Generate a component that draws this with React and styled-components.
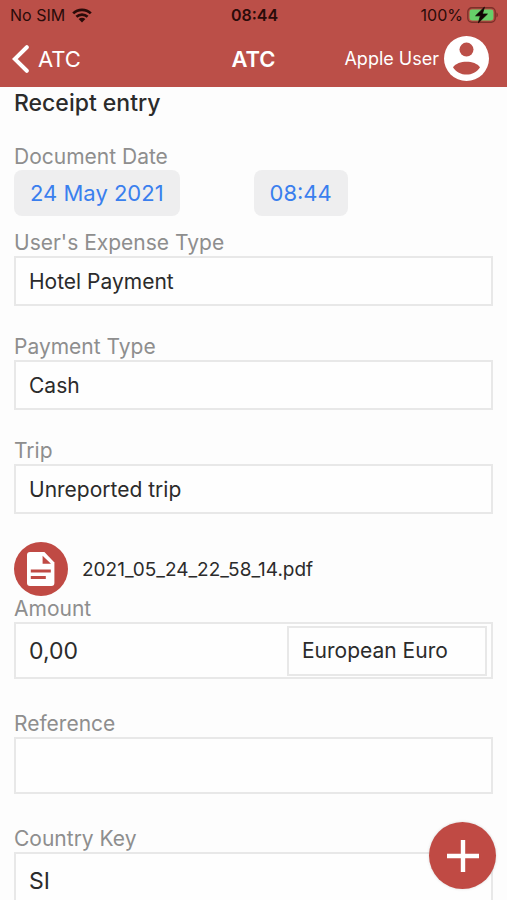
import styled, { createGlobalStyle } from "styled-components";
import { useState } from "react";

const GlobalStyle = createGlobalStyle`
  * {
    box-sizing: border-box;
  }

  body {
    margin: 0;
    background-color: #fdfdfd;
    color: #2b2b2b;
    font-family: Inter, "Liberation Sans", sans-serif;
  }

  button,
  input,
  select {
    font-family: inherit;
    color: inherit;
  }
`;

const StyledApp = styled.div`
  display: flex;
  flex-direction: column;
  height: 100vh;
`;

const StyledHeader = styled.header`
  flex-shrink: 0;
  background-color: #bb4f48;
`;

const StyledStatusBar = styled.div`
  display: grid;
  grid-template-columns: 1fr auto 1fr;
  align-items: center;
  height: 30px;
  padding: 0 8px 0 10px;
  font-size: 16px;
  color: #2a0b09;

  strong {
    font-weight: 600;
  }
`;

const StyledStatusGroup = styled.div`
  display: flex;
  align-items: center;
  justify-content: ${({ $end }) => ($end ? "flex-end" : "flex-start")};
  gap: ${({ $end }) => ($end ? "4px" : "7px")};
`;

const StyledNav = styled.nav`
  display: grid;
  grid-template-columns: 1fr auto 1fr;
  align-items: center;
  height: 57px;
  padding: 0 12px;
  color: white;
`;

const StyledNavTitle = styled.h1`
  margin: 0;
  font-size: 22px;
  font-weight: 600;
  line-height: 26px;
`;

const StyledBack = styled.a`
  display: flex;
  align-items: center;
  gap: 9px;
  font-size: 22px;
  line-height: 26px;
  color: white;
  text-decoration: none;
`;

const StyledUser = styled.button`
  display: flex;
  align-items: center;
  justify-self: end;
  gap: 5px;
  padding: 0 6px 0 0;
  border: none;
  background: none;
  font-size: 18px;
  color: white;
  white-space: nowrap;
`;

const StyledMain = styled.main`
  flex: 1;
  overflow-y: auto;
  scrollbar-width: none;
  padding: 3px 14px 24px;
`;

const StyledHeading = styled.h2`
  margin: 0 0 28px;
  font-size: 23px;
  font-weight: 500;
  line-height: 26px;
`;

const StyledField = styled.div`
  display: flex;
  flex-direction: column;
  margin-bottom: ${({ $gap }) => $gap || 28}px;
`;

const StyledLabel = styled.label`
  font-size: 21px;
  line-height: 26px;
  color: #8e8e8e;
`;

const StyledDateRow = styled.div`
  display: grid;
  grid-template-columns: 1fr 1fr;
  justify-items: start;
`;

const StyledChip = styled.button`
  height: 46px;
  padding: 0 16px;
  border: none;
  border-radius: 8px;
  background-color: #eeeeef;
  font-size: 22px;
  color: #3a7fee;
`;

const StyledSelect = styled.select`
  width: 100%;
  height: 50px;
  padding: 0 13px;
  border: 2px solid #e8e8e8;
  border-radius: 0;
  appearance: none;
  background-color: #fefefe;
  font-size: 21px;
`;

const StyledInput = styled.input`
  width: 100%;
  height: 57px;
  padding: 0 13px;
  border: 2px solid #e8e8e8;
  border-radius: 0;
  background-color: #fefefe;
  font-size: 23px;
`;

const StyledAmount = styled.div`
  display: flex;
  align-items: center;
  height: 57px;
  padding-right: 4px;
  border: 2px solid #e8e8e8;
  background-color: #fefefe;

  input {
    flex: 1;
    min-width: 0;
    height: 100%;
    border: none;
    background: none;
  }

  select {
    flex: 0 0 200px;
  }
`;

const StyledFile = styled.a`
  display: flex;
  align-items: center;
  gap: 14px;
  font-size: 19px;
  color: inherit;
  text-decoration: none;
`;

const StyledFileIcon = styled.span`
  display: flex;
  align-items: center;
  justify-content: center;
  width: 54px;
  height: 54px;
  border-radius: 50%;
  background-color: #c04a44;
`;

const StyledAdd = styled.button`
  position: fixed;
  right: 11px;
  bottom: 11px;
  display: flex;
  align-items: center;
  justify-content: center;
  width: 67px;
  height: 67px;
  padding: 0;
  border: none;
  border-radius: 50%;
  background-color: #c04a44;
  box-shadow: 0 0 3px rgba(0, 0, 0, 0.15);
`;

const WifiIcon = () => (
  <svg width="20" height="15" viewBox="0 0 20 15" fill="none">
    <path
      d="M1.2 5.4C6 0.6 14 0.6 18.8 5.4M4.4 8.8C7.6 5.8 12.4 5.8 15.6 8.8"
      stroke="currentColor"
      strokeWidth="2.7"
    />
    <path d="M6.6 11.1C8.6 9.4 11.4 9.4 13.4 11.1L10 14.6Z" fill="currentColor" />
  </svg>
);

const BatteryIcon = () => (
  <svg width="32" height="18" viewBox="0 0 32 18">
    <rect x="0.8" y="1.8" width="27.4" height="14.4" rx="4" fill="none" stroke="#7c3029" strokeWidth="1.4" />
    <rect x="2.6" y="3.6" width="23.8" height="10.8" rx="2.4" fill="#66cf69" />
    <path d="M29.4 6.6C31.4 7.2 31.4 10.8 29.4 11.4Z" fill="#7c3029" />
    <path
      d="M17.4 1.2L8.6 9.8H13.4L11.4 16.8L20.4 8H15.4Z"
      fill="#100504"
      stroke="#100504"
      strokeWidth="0.8"
      strokeLinejoin="round"
    />
  </svg>
);

const BackIcon = () => (
  <svg width="17" height="28" viewBox="0 0 17 28" fill="none">
    <path
      d="M14.8 2.2L2.8 14L14.8 25.8"
      stroke="currentColor"
      strokeWidth="4"
      strokeLinecap="round"
      strokeLinejoin="miter"
    />
  </svg>
);

const UserIcon = () => (
  <svg width="45" height="45" viewBox="0 0 45 45">
    <circle cx="22.5" cy="22.5" r="22.5" fill="white" />
    <circle cx="22.5" cy="13.6" r="7" fill="#bb4f48" />
    <path d="M9 31.2C14 23.9 31 23.9 36 31.2C30 41 15 41 9 31.2Z" fill="#bb4f48" />
  </svg>
);

const DocumentIcon = () => (
  <svg width="28" height="34" viewBox="0 0 28 34">
    <path
      d="M3 0H17.4L27.4 10.4V31A3 3 0 0 1 24.4 34H3A3 3 0 0 1 0 31V3A3 3 0 0 1 3 0Z"
      fill="white"
    />
    <path d="M15.6 3.8V11.8H24ZM3.8 17.4H23.8V20.4H3.8ZM3.8 24H18.8V27H3.8Z" fill="#c04a44" />
  </svg>
);

const PlusIcon = () => (
  <svg width="32" height="32" viewBox="0 0 32 32">
    <path d="M16 0V32M0 16H32" stroke="white" strokeWidth="4.4" />
  </svg>
);

const SelectField = ({ id, label, options }) => {
  return (
    <StyledField>
      <StyledLabel htmlFor={id}>{label}</StyledLabel>
      <StyledSelect id={id}>
        {options.map((option) => (
          <option key={option}>{option}</option>
        ))}
      </StyledSelect>
    </StyledField>
  );
};

const App = () => {
  const [receipt, setReceipt] = useState({
    amount: "0,00",
    reference: "",
    country: "SI",
  });

  const handleChange = (e) => {
    setReceipt({ ...receipt, [e.target.name]: e.target.value });
  };

  return (
    <StyledApp>
      <GlobalStyle />
      <StyledHeader>
        <StyledStatusBar>
          <StyledStatusGroup>
            <span>No SIM</span>
            <WifiIcon />
          </StyledStatusGroup>
          <strong>08:44</strong>
          <StyledStatusGroup $end>
            <span>100%</span>
            <BatteryIcon />
          </StyledStatusGroup>
        </StyledStatusBar>
        <StyledNav>
          <StyledBack href="#">
            <BackIcon />
            ATC
          </StyledBack>
          <StyledNavTitle>ATC</StyledNavTitle>
          <StyledUser type="button">
            Apple User
            <UserIcon />
          </StyledUser>
        </StyledNav>
      </StyledHeader>
      <StyledMain>
        <StyledHeading>Receipt entry</StyledHeading>
        <StyledField $gap={14}>
          <StyledLabel htmlFor="date">Document Date</StyledLabel>
          <StyledDateRow>
            <StyledChip type="button" id="date">
              24 May 2021
            </StyledChip>
            <StyledChip type="button">08:44</StyledChip>
          </StyledDateRow>
        </StyledField>
        <SelectField id="expense" label="User's Expense Type" options={["Hotel Payment"]} />
        <SelectField id="payment" label="Payment Type" options={["Cash"]} />
        <SelectField id="trip" label="Trip" options={["Unreported trip"]} />
        <StyledFile href="#">
          <StyledFileIcon>
            <DocumentIcon />
          </StyledFileIcon>
          2021_05_24_22_58_14.pdf
        </StyledFile>
        <StyledField $gap={32}>
          <StyledLabel htmlFor="amount">Amount</StyledLabel>
          <StyledAmount>
            <StyledInput id="amount" name="amount" value={receipt.amount} onChange={handleChange} />
            <StyledSelect aria-label="Currency">
              <option>European Euro</option>
            </StyledSelect>
          </StyledAmount>
        </StyledField>
        <StyledField $gap={32}>
          <StyledLabel htmlFor="reference">Reference</StyledLabel>
          <StyledInput id="reference" name="reference" value={receipt.reference} onChange={handleChange} />
        </StyledField>
        <StyledField>
          <StyledLabel htmlFor="country">Country Key</StyledLabel>
          <StyledInput id="country" name="country" value={receipt.country} onChange={handleChange} />
        </StyledField>
      </StyledMain>
      <StyledAdd type="button" aria-label="Add">
        <PlusIcon />
      </StyledAdd>
    </StyledApp>
  );
};

export default App;
